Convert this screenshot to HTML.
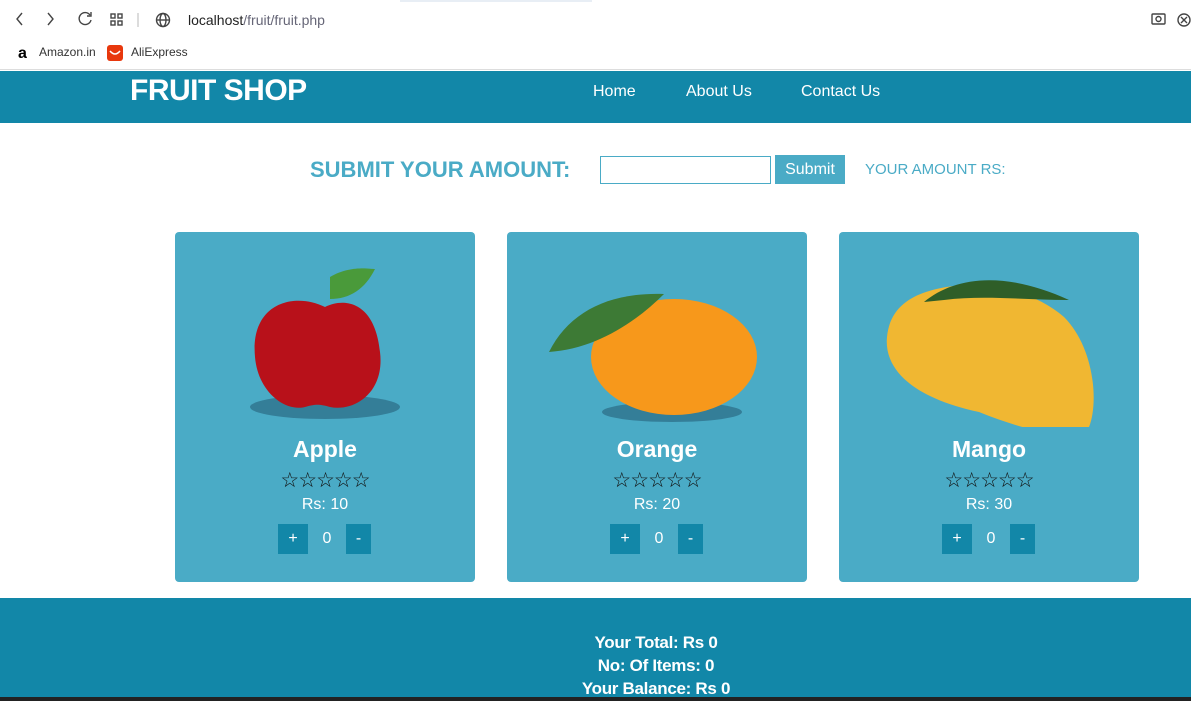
<!DOCTYPE html>
<html><head><meta charset="utf-8"><style>
*{margin:0;padding:0;box-sizing:border-box}
body{width:1191px;height:701px;overflow:hidden;background:#fff;font-family:"Liberation Sans",sans-serif;position:relative}
.abs{position:absolute}
.chrome{height:70px;background:#fff;border-bottom:1px solid #ddd}
.hdr{top:71px;left:0;width:1191px;height:52px;background:#1287a8}
.logo{left:130px;top:74px;color:#fff;font-weight:bold;font-size:30px;letter-spacing:-0.5px}
.nav{top:83px;color:#fff;font-size:16px}
.card{top:232px;width:300px;height:350px;background:#4aabc6;border-radius:4px;text-align:center;color:#fff}
.card h2{position:absolute;top:204px;width:100%;font-size:23px}
.stars{position:absolute;top:236px;width:100%;font-size:21px;color:#111;letter-spacing:-1px}
.price{position:absolute;top:264px;width:100%;font-size:16px}
.qty{position:absolute;top:292px;left:103px;width:93px;height:30px;display:flex;font-size:16px}
.qty span{display:flex;align-items:center;justify-content:center}
.foot{top:598px;left:0;width:1191px;height:103px;background:#1287a8;color:#fff;font-weight:bold;font-size:17px;text-align:center;padding-top:33px;padding-left:121px;line-height:23px;letter-spacing:-0.3px}
</style></head><body>
<div class="abs chrome" style="left:0;top:0;width:1191px"></div>
<div class="abs" style="left:400px;top:0;width:192px;height:2px;background:#e8eef5"></div>
<svg class="abs" style="left:0;top:0" width="1191" height="70">
<g stroke="#444" stroke-width="1.4" fill="none">
<path d="M22 13l-5 6 5 6"/><path d="M48 13l5 6-5 6"/>
<path d="M90 15a6 6 0 1 0 1 5"/><path d="M91 12v4h-4"/>
<rect x="111" y="14" width="4" height="4"/><rect x="118" y="14" width="4" height="4"/><rect x="111" y="21" width="4" height="4"/><rect x="118" y="21" width="4" height="4"/>
<line x1="138" y1="13" x2="138" y2="27" stroke="#ccc"/>
<circle cx="163" cy="20" r="6.5"/><ellipse cx="163" cy="20" rx="3" ry="6.5"/><line x1="156.5" y1="20" x2="169.5" y2="20"/>
<rect x="1152" y="14" width="13" height="10" rx="1"/><circle cx="1158.5" cy="19" r="2.5"/>
<circle cx="1184" cy="20" r="6"/><path d="M1181 17l6 6M1187 17l-6 6"/>
</g>
<text x="18" y="58" font-size="16" font-weight="bold" font-family="Liberation Sans">a</text>
<rect x="107" y="45" width="16" height="16" rx="3" fill="#e8380d"/><path d="M110 51q5 6 10 0" stroke="#fff" stroke-width="1.5" fill="none"/>
</svg>
<div class="abs" style="left:188px;top:12px;font-size:14px;color:#222">localhost<span style="color:#667">/fruit/fruit.php</span></div>
<div class="abs" style="left:39px;top:45px;font-size:12px;color:#333">Amazon.in</div>
<div class="abs" style="left:131px;top:45px;font-size:12px;color:#333">AliExpress</div>

<div class="abs hdr"></div>
<div class="abs logo">FRUIT SHOP</div>
<div class="abs nav" style="left:593px">Home</div>
<div class="abs nav" style="left:686px">About Us</div>
<div class="abs nav" style="left:801px">Contact Us</div>

<div class="abs" style="left:310px;top:157px;font-size:22px;font-weight:bold;color:#4aabc6">SUBMIT YOUR AMOUNT:</div>
<div class="abs" style="left:600px;top:156px;width:171px;height:28px;border:1px solid #4aabc6"></div>
<div class="abs" style="left:775px;top:155px;width:70px;height:29px;background:#4aabc6;color:#fff;font-size:16px;text-align:center;line-height:29px">Submit</div>
<div class="abs" style="left:865px;top:161px;font-size:15px;color:#4aabc6">YOUR AMOUNT RS:</div>

<div class="abs card" style="left:175px">
<svg class="abs" style="left:55px;top:30px" width="190" height="160"><ellipse cx="95" cy="145" rx="75" ry="12" fill="#27607a" opacity=".6"/><path d="M95 45c-30-15-75-5-70 50 3 35 30 55 50 50 10-3 15-3 25 0 25 5 55-15 50-55-5-50-35-55-55-45z" fill="#b8111a"/><path d="M100 15c20-12 40-8 45-8-10 20-25 30-45 30z" fill="#4a9a3a"/></svg>
<h2>Apple</h2><div class="stars">☆☆☆☆☆</div><div class="price">Rs: 10</div>
<div class="qty"><span style="width:30px;background:#1287a8">+</span><span style="width:38px">0</span><span style="width:25px;background:#1287a8">-</span></div></div>

<div class="abs card" style="left:507px">
<svg class="abs" style="left:40px;top:55px" width="220" height="140"><ellipse cx="125" cy="125" rx="70" ry="10" fill="#27607a" opacity=".6"/><ellipse cx="127" cy="70" rx="83" ry="58" fill="#f7981b"/><path d="M2 65c20-40 60-60 115-58-30 30-70 55-115 58z" fill="#3d7a35"/></svg>
<h2>Orange</h2><div class="stars">☆☆☆☆☆</div><div class="price">Rs: 20</div>
<div class="qty"><span style="width:30px;background:#1287a8">+</span><span style="width:38px">0</span><span style="width:25px;background:#1287a8">-</span></div></div>

<div class="abs card" style="left:839px">
<svg class="abs" style="left:45px;top:35px" width="215" height="160"><path d="M30 30c40-20 110-15 150 20 30 30 35 85 25 110-15 15-60 5-110-15C25 130 0 100 3 70 5 50 15 38 30 30z" fill="#f0b732"/><path d="M40 35c30-25 80-32 145-2-45 0-85 -5-125 0z" fill="#2f5e28"/></svg>
<h2>Mango</h2><div class="stars">☆☆☆☆☆</div><div class="price">Rs: 30</div>
<div class="qty"><span style="width:30px;background:#1287a8">+</span><span style="width:38px">0</span><span style="width:25px;background:#1287a8">-</span></div></div>

<div class="abs foot">Your Total: Rs 0<br>No: Of Items: 0<br>Your Balance: Rs 0</div>
<div class="abs" style="left:0;top:697px;width:1191px;height:4px;background:#222"></div>
</body></html>
